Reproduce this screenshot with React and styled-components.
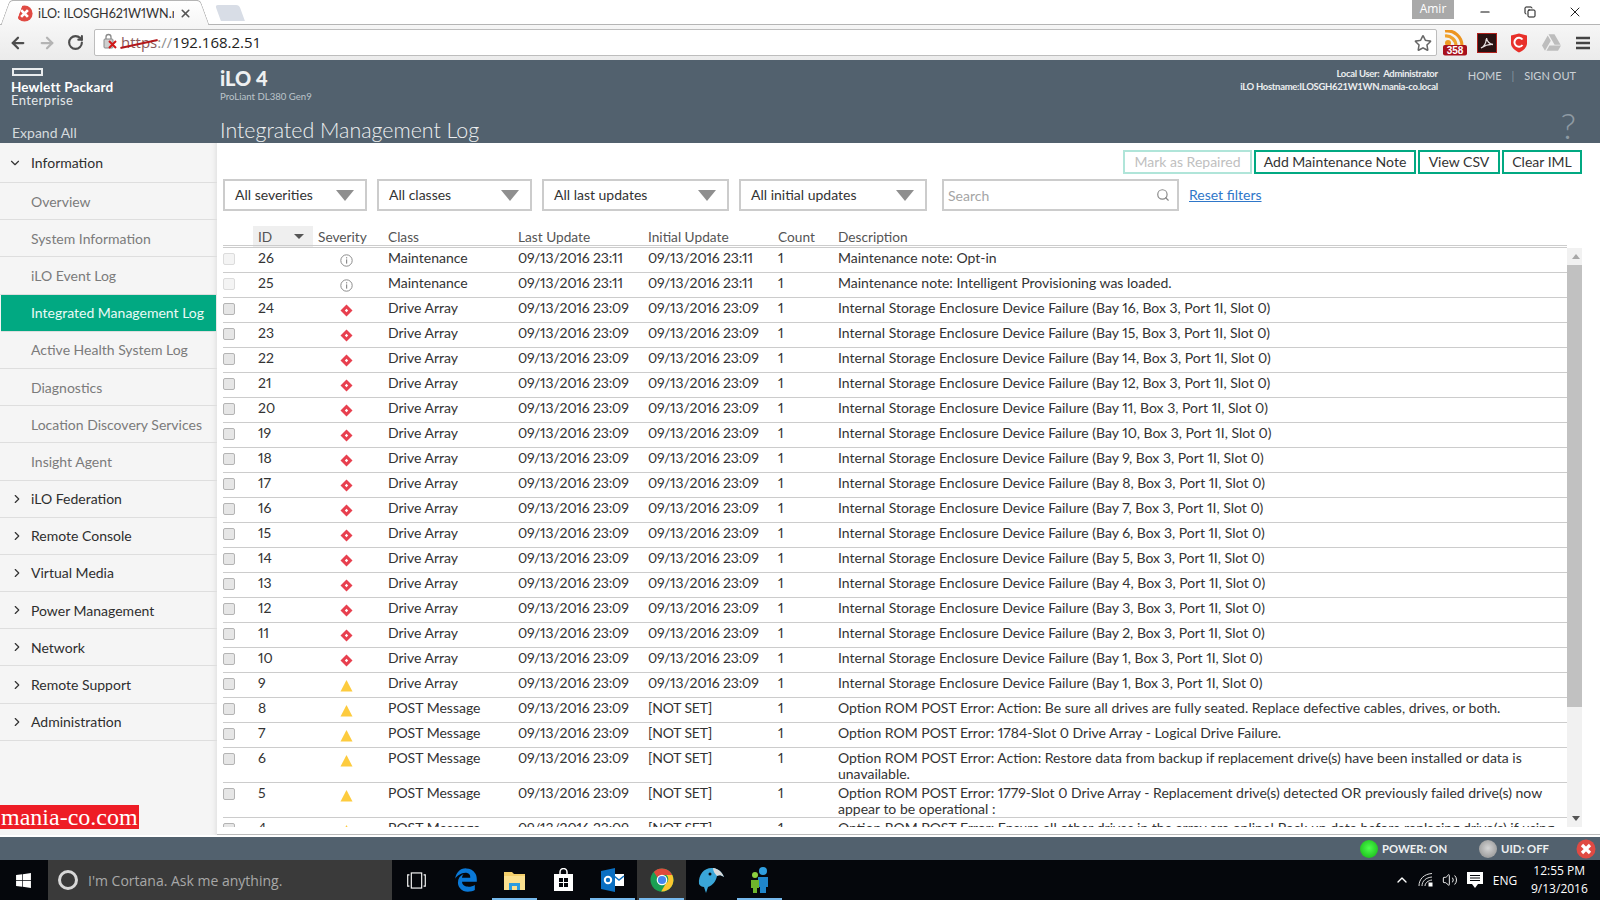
import React from "react";
import styled, { createGlobalStyle } from "styled-components";
import { FaWindows, FaEdgeLegacy, FaGoogleDrive, FaRegStar } from "react-icons/fa";
import { LuChevronDown, LuChevronRight, LuSearch, LuVolume2, LuChevronUp, LuRotateCw, LuArrowLeft, LuArrowRight, LuX, LuMinus, LuCopy } from "react-icons/lu";

const slate = "#52616e";
const green = "#01a982";
const uiFont = `"Lato", "Open Sans", sans-serif`;
const winFont = `"Open Sans", "Noto Sans", sans-serif`;

const GlobalStyle = createGlobalStyle`
  html, body { margin: 0; padding: 0; background: #fff; overflow: hidden; }
  * { box-sizing: border-box; }
  #root { width: 1600px; height: 900px; }
`;

const Page = styled.div`
  width: 1600px;
  height: 900px;
  display: flex;
  flex-direction: column;
  font-family: ${uiFont};
  overflow: hidden;
`;

/* browser chrome */
const TabStrip = styled.div`
  height: 25px;
  flex: none;
  display: flex;
  align-items: flex-end;
  padding-left: 12px;
  background: #fff;
  border-bottom: 1px solid #b5b5b5;
  position: relative;
`;

const ActiveTab = styled.div`
  width: 186px;
  height: 25px;
  margin-bottom: -1px;
  display: flex;
  align-items: center;
  padding-left: 4px;
  gap: 5px;
  position: relative;
  z-index: 1;
  font: 12.6px ${uiFont};
  color: #333;
  background: linear-gradient(#fff, #f6f6f6);
  border-top: 1px solid #b5b5b5;
  &::before, &::after {
    content: "";
    position: absolute;
    top: -1px;
    bottom: 0;
    width: 14px;
    background: linear-gradient(#fff, #f6f6f6);
    border-top: 1px solid #b5b5b5;
  }
  &::before { left: -7px; transform: skewX(-20deg); border-left: 1px solid #b5b5b5; border-top-left-radius: 4px; }
  &::after { right: -7px; transform: skewX(20deg); border-right: 1px solid #b5b5b5; border-top-right-radius: 4px; }
`;

const TabTitle = styled.span`
  width: 136px;
  white-space: nowrap;
  overflow: hidden;
  position: relative;
  z-index: 1;
  font-variant-numeric: proportional-nums;
`;

const GhostTab = styled.div`
  width: 24px;
  height: 16px;
  margin: 0 0 3px 20px;
  background: #d8dde6;
  border-radius: 3px 3px 0 0;
  transform: skewX(20deg);
`;

const UserBadge = styled.div`
  position: absolute;
  left: 1412px;
  top: 0;
  width: 42px;
  height: 19px;
  background: #a9a9a9;
  color: #fff;
  font: 12px/18px ${winFont};
  text-align: center;
`;

const WindowButtons = styled.div`
  margin-left: auto;
  height: 24px;
  display: flex;
  align-self: flex-start;
  padding-right: 3px;
  color: #111;
`;

const WindowButton = styled.div`
  width: 45px;
  height: 24px;
  display: flex;
  align-items: center;
  justify-content: center;
`;

const Toolbar = styled.div`
  height: 35px;
  flex: none;
  display: flex;
  align-items: center;
  background: linear-gradient(#f6f6f6, #ebebeb);
`;

const NavButton = styled.div`
  width: 29px;
  height: 28px;
  display: flex;
  align-items: center;
  justify-content: center;
  color: ${(p) => (p.$off ? "#b4b4b4" : "#4d4d4d")};
`;

const NavGroup = styled.div`
  width: 94px;
  padding-left: 3px;
  display: flex;
`;

const Omnibox = styled.div`
  width: 1343px;
  height: 27px;
  background: #fff;
  border: 1px solid #bdbdbd;
  border-radius: 2px;
  display: flex;
  align-items: center;
  padding: 0 4px 2px 7px;
  font: 15px ${winFont};
  color: #222;
`;

const Strike = styled.span`
  color: #8a5a5a;
  position: relative;
  margin-left: 2px;
  &::after {
    content: "";
    position: absolute;
    left: -1px;
    right: -1px;
    top: 11px;
    height: 1.5px;
    background: #b3181c;
    transform: rotate(-12deg);
  }
`;

const Scheme = styled.span`
  color: #8f8f8f;
`;

const StarSlot = styled.div`
  margin-left: auto;
  margin-top: 2px;
  color: #666;
  display: flex;
`;

const Extensions = styled.div`
  display: flex;
  margin-left: 2px;
`;

const Extension = styled.div`
  width: 32px;
  height: 30px;
  display: flex;
  align-items: center;
  justify-content: center;
  color: #bdbdbd;
`;

/* iLO header */
const Header = styled.header`
  height: 83px;
  flex: none;
  display: grid;
  grid-template-columns: 220px 1fr auto;
  background: ${slate};
  color: #fff;
`;

const Brand = styled.div`
  padding: 8px 0 0 12px;
  display: flex;
  flex-direction: column;
`;

const LogoBar = styled.div`
  width: 31px;
  height: 8px;
  border: 2px solid #e9ecee;
`;

const BrandName = styled.div`
  font: 700 13.5px/13px ${uiFont};
  margin-top: 5px;
  margin-left: -1px;
  letter-spacing: 0.15px;
`;

const BrandSub = styled.div`
  font: 400 13px/13px ${uiFont};
  margin-left: -1px;
  color: #e5e8ea;
  letter-spacing: 0.4px;
`;

const ExpandAll = styled.div`
  margin-top: 17px;
  font: 14px/18px ${uiFont};
  color: #d5dadd;
`;

const Product = styled.div`
  padding: 6px 0 0 0;
`;

const ProductName = styled.div`
  font: 900 20px/24px ${uiFont};
  color: #eef0f1;
`;

const ProductModel = styled.div`
  font: 9.6px/12px ${uiFont};
  color: #bcc4ca;
  margin-top: 1px;
`;

const PageTitle = styled.h1`
  margin: 13px 0 0;
  font: 300 21.4px/28px ${uiFont};
  color: #eef0f1;
`;

const HeaderRight = styled.div`
  display: flex;
  flex-direction: column;
  align-items: flex-end;
  padding: 7px 24px 0 0;
`;

const SessionRow = styled.div`
  display: flex;
  gap: 30px;
`;

const SessionInfo = styled.div`
  font: 700 9.5px/13px ${uiFont};
  letter-spacing: -0.3px;
  text-align: right;
  color: #eceeef;
`;

const TopLinks = styled.div`
  display: flex;
  gap: 10px;
  font: 11px/15px ${uiFont};
  color: #ccd2d6;
  padding-top: 1px;
`;

const Separator = styled.span`
  color: #8795a0;
`;

const HelpMark = styled.div`
  font: 300 36px/30px ${uiFont};
  color: #8e9aa3;
  margin-top: 17px;
`;

/* body */
const Body = styled.div`
  flex: 1;
  min-height: 0;
  display: flex;
`;

const Sidebar = styled.nav`
  width: 217px;
  flex: none;
  background: #f5f5f5;
  box-shadow: inset -5px 0 5px -4px #dcdcdc;
  position: relative;
`;

const NavRow = styled.div`
  height: ${(p) => p.$h || 37.2}px;
  display: flex;
  align-items: center;
  border-bottom: 1px solid #dedede;
  font: 14px ${uiFont};
  position: relative;
  color: ${(p) => (p.$active ? "#eafaf6" : p.$sub ? "#7b7b7b" : "#2e2e2e")};
  background: ${(p) => (p.$active ? green : "transparent")};
  margin-left: ${(p) => (p.$active ? 1 : 0)}px;
  margin-right: ${(p) => (p.$active ? 1 : 0)}px;
  padding-left: ${(p) => (p.$active ? 30 : 31)}px;
`;

const NavArrow = styled.span`
  position: absolute;
  left: ${(p) => (p.$open ? 8 : 10)}px;
  top: 50%;
  transform: translateY(-50%);
  display: flex;
  color: #333;
`;

const Watermark = styled.div`
  position: absolute;
  left: 0;
  top: 662px;
  width: 139px;
  height: 24px;
  background: #ee1c25;
  color: #fff;
  font: 400 24px/24px "Liberation Serif", serif;
  white-space: nowrap;
  padding-left: 1px;
`;

const Main = styled.main`
  flex: 1;
  min-width: 0;
  padding: 7px 18px 0 6px;
  display: flex;
  flex-direction: column;
  background: #fff;
`;

const Actions = styled.div`
  display: flex;
  justify-content: flex-end;
  gap: 2px;
  height: 24px;
`;

const ActionButton = styled.button`
  height: 24px;
  width: ${(p) => p.$w}px;
  padding: 0 0 2px;
  background: #fff;
  border: 2px solid ${(p) => (p.$off ? "#b0e5d9" : green)};
  color: ${(p) => (p.$off ? "#c0c0c0" : "#333")};
  font: 14px ${uiFont};
`;

const Filters = styled.div`
  display: flex;
  align-items: center;
  height: 32px;
  margin-top: 5px;
  gap: 10px;
`;

const Select = styled.div`
  width: ${(p) => p.$w}px;
  height: 32px;
  border: 2px solid #ccc;
  display: flex;
  align-items: center;
  justify-content: space-between;
  padding: 0 11px 2px 10px;
  font: 14px ${uiFont};
  color: #333;
  &::after {
    content: "";
    margin-top: 2px;
    border-left: 9px solid transparent;
    border-right: 9px solid transparent;
    border-top: 11px solid #8f8f8f;
  }
`;

const Search = styled.div`
  width: 237px;
  height: 32px;
  margin-left: 5px;
  border: 2px solid #ccc;
  display: flex;
  align-items: center;
  justify-content: space-between;
  padding: 0 7px 0 4px;
  font: 14px ${uiFont};
  color: #a5a5a5;
`;

const ResetLink = styled.a`
  font: 14px ${uiFont};
  color: #2f77c9;
  text-decoration: underline;
  margin-bottom: 1px;
`;

const TableArea = styled.div`
  flex: 1;
  min-height: 0;
  margin-top: 15px;
  margin-bottom: 8px;
  display: flex;
  overflow: hidden;
`;

const TableClip = styled.div`
  width: 1344px;
  flex: none;
  overflow: hidden;
`;

const LogTable = styled.table`
  width: 1344px;
  table-layout: fixed;
  border-collapse: separate;
  border-spacing: 0;
  font: 14px/16px ${uiFont};
  color: #333;
  font-variant-numeric: proportional-nums;
`;

const HeadCell = styled.th`
  height: 22px;
  padding: 2px 5px 0;
  text-align: left;
  font-weight: 400;
  font-size: 13.7px;
  color: #555;
  border-bottom: 3px double #ccc;
  background: ${(p) => (p.$sorted ? "#efefef" : "transparent")};
  position: relative;
`;

const SortArrow = styled.span`
  position: absolute;
  right: 9px;
  top: 8px;
  border-left: 5px solid transparent;
  border-right: 5px solid transparent;
  border-top: 5px solid #555;
`;

const Cell = styled.td`
  padding: 2px 5px 0;
  height: 25px;
  vertical-align: top;
  border-bottom: 1px solid #ccc;
  white-space: ${(p) => (p.$wrap ? "normal" : "nowrap")};
  letter-spacing: ${(p) => (p.$stamp ? "-0.15px" : "0")};
`;

const CheckCell = styled.td`
  padding: 5px 0 0 0;
  vertical-align: top;
  border-bottom: 1px solid #ccc;
`;

const IconCell = styled.td`
  padding: 6px 0 0 27px;
  vertical-align: top;
  border-bottom: 1px solid #ccc;
  line-height: 0;
`;

const Check = styled.span`
  display: block;
  width: 12px;
  height: 12px;
  border: 1px solid ${(p) => (p.$off ? "#dcdcdc" : "#b4b4b4")};
  border-radius: 2px;
  background: ${(p) => (p.$off ? "#f4f4f4" : "#e6e6e6")};
`;

const Scrollbar = styled.div`
  width: 17px;
  flex: none;
  margin-top: 22px;
  background: #f1f1f1;
  display: flex;
  flex-direction: column;
  align-items: center;
  justify-content: space-between;
  padding: 6px 0;
  position: relative;
`;

const ScrollArrow = styled.span`
  width: 0;
  height: 0;
  border-left: 4px solid transparent;
  border-right: 4px solid transparent;
  ${(p) => (p.$up ? "border-bottom: 5px solid #a8a8a8;" : "border-top: 5px solid #555;")}
`;

const ScrollThumb = styled.div`
  position: absolute;
  left: 0;
  top: 17px;
  width: 100%;
  height: 442px;
  background: #c1c1c1;
`;

/* status bar */
const StatusBar = styled.div`
  height: 25px;
  flex: none;
  background: ${slate};
  border-top: 2px solid #fff;
  box-shadow: 0 -1px 0 #bbb;
  display: flex;
  align-items: center;
  justify-content: flex-end;
  font: 700 11.3px ${uiFont};
  color: #eef0f1;
  padding-right: 4px;
`;

const Led = styled.span`
  width: 18px;
  height: 18px;
  border-radius: 50%;
  margin-right: 4px;
  background: radial-gradient(circle at 50% 45%, ${(p) => (p.$on ? "#4dff4d, #12b012" : "#d5d5d5, #8a8a8a")});
`;

const StatusLabel = styled.span`
  margin-right: ${(p) => p.$gap}px;
`;

const CloseBall = styled.span`
  width: 20px;
  height: 20px;
  display: flex;
`;

/* windows taskbar */
const Taskbar = styled.div`
  height: 40px;
  flex: none;
  background: #05070c;
  display: flex;
  align-items: stretch;
  color: #fff;
  font-family: ${winFont};
`;

const StartButton = styled.div`
  width: 48px;
  display: flex;
  align-items: center;
  justify-content: center;
  padding-right: 1px;
`;

const CortanaBox = styled.div`
  width: 344px;
  background: #3a3a3a;
  display: flex;
  align-items: center;
  gap: 10px;
  padding-left: 10px;
  font-size: 14px;
  color: #a8a8a8;
`;

const Ring = styled.span`
  width: 20px;
  height: 20px;
  border-radius: 50%;
  border: 3px solid #d8d8d8;
`;

const TaskIcon = styled.div`
  width: 49px;
  display: flex;
  align-items: center;
  justify-content: center;
  position: relative;
  background: ${(p) => (p.$current ? "#333" : "transparent")};
  ${(p) =>
    p.$open &&
    `&::after {
      content: "";
      position: absolute;
      left: 2px;
      right: 2px;
      bottom: 0;
      height: 2px;
      background: #76b9ed;
    }`}
`;

const Tray = styled.div`
  margin-left: auto;
  display: flex;
  align-items: center;
  padding-right: 15px;
`;

const TraySlot = styled.div`
  width: ${(p) => p.$w || 24}px;
  display: flex;
  justify-content: center;
  font-size: 12px;
`;

const Clock = styled.div`
  width: 54px;
  margin-left: 9px;
  text-align: right;
  font-size: 12px;
  line-height: 18px;
  white-space: nowrap;
`;

const columns = [30, 60, 70, 130, 130, 130, 60, 734];

const navTop = ["Overview", "System Information", "iLO Event Log", "Integrated Management Log", "Active Health System Log", "Diagnostics", "Location Discovery Services", "Insight Agent"];
const navBottom = ["iLO Federation", "Remote Console", "Virtual Media", "Power Management", "Network", "Remote Support", "Administration"];

const failure = (bay) => `Internal Storage Enclosure Device Failure (Bay ${bay}, Box 3, Port 1I, Slot 0)`;
const bays = [16, 15, 14, 12, 11, 10, 9, 8, 7, 6, 5, 4, 3, 2, 1, 1];
const stamp = "09/13/2016 23:09";

const rows = [
  { id: 26, sev: "info", cls: "Maintenance", last: "09/13/2016 23:11", first: "09/13/2016 23:11", desc: "Maintenance note: Opt-in", off: true },
  { id: 25, sev: "info", cls: "Maintenance", last: "09/13/2016 23:11", first: "09/13/2016 23:11", desc: "Maintenance note: Intelligent Provisioning was loaded.", off: true },
  ...bays.map((bay, i) => ({ id: 24 - i, sev: i === 15 ? "warn" : "crit", cls: "Drive Array", last: stamp, first: stamp, desc: failure(bay) })),
  { id: 8, sev: "warn", cls: "POST Message", last: stamp, first: "[NOT SET]", desc: "Option ROM POST Error: Action: Be sure all drives are fully seated. Replace defective cables, drives, or both." },
  { id: 7, sev: "warn", cls: "POST Message", last: stamp, first: "[NOT SET]", desc: "Option ROM POST Error: 1784-Slot 0 Drive Array - Logical Drive Failure." },
  { id: 6, sev: "warn", cls: "POST Message", last: stamp, first: "[NOT SET]", desc: "Option ROM POST Error: Action: Restore data from backup if replacement drive(s) have been installed or data is unavailable." },
  { id: 5, sev: "warn", cls: "POST Message", last: stamp, first: "[NOT SET]", desc: "Option ROM POST Error: 1779-Slot 0 Drive Array - Replacement drive(s) detected OR previously failed drive(s) now appear to be operational :" },
  { id: 4, sev: "warn", cls: "POST Message", last: stamp, first: "[NOT SET]", desc: "Option ROM POST Error: Ensure all other drives in the array are online! Back up data before replacing drive(s) if using" },
];

const SeverityIcon = ({ type }) => {
  if (type === "info") {
    return (
      <svg width="13" height="13" viewBox="0 0 13 13">
        <circle cx="6.5" cy="6.5" r="5.7" fill="none" stroke="#8c8c8c" strokeWidth="1" />
        <rect x="6" y="5.4" width="1.2" height="4.2" fill="#8c8c8c" />
        <rect x="6" y="3.2" width="1.2" height="1.2" fill="#8c8c8c" />
      </svg>
    );
  }
  if (type === "crit") {
    return (
      <svg width="13" height="13" viewBox="0 0 13 13">
        <path d="M6.5 0.5 12.5 6.5 6.5 12.5 0.5 6.5Z" fill="#e8404f" />
        <path d="M6.5 4.8 8.2 6.5 6.5 8.2 4.8 6.5Z" fill="#fff" />
      </svg>
    );
  }
  return (
    <svg width="13" height="13" viewBox="0 0 13 13">
      <path d="M6.5 1 12.5 12.5H0.5Z" fill="#fdcb3e" />
    </svg>
  );
};

const ErrorBall = ({ size }) => (
  <svg width={size} height={size} viewBox="0 0 20 20">
    <circle cx="10" cy="10" r="9.5" fill="#e04a43" />
    <path d="M6 6 14 14M14 6 6 14" stroke="#fff" strokeWidth="3.2" />
  </svg>
);

const LockIcon = () => (
  <svg width="17" height="17" viewBox="0 0 17 17">
    <rect x="2" y="6" width="9" height="9" rx="1" fill="#cfcfcf" stroke="#8a8a8a" />
    <path d="M4 6V4a2.5 2.5 0 0 1 5 0v2" fill="none" stroke="#8a8a8a" strokeWidth="1.3" />
    <path d="M7 8 14 15M14 8 7 15" stroke="#d01818" strokeWidth="2" />
  </svg>
);

const RssBadge = () => (
  <svg width="26" height="26" viewBox="0 0 26 26">
    <circle cx="6" cy="13" r="3" fill="#ee9a22" />
    <path d="M3 6a10 10 0 0 1 11 10" fill="none" stroke="#f0a22c" strokeWidth="3.2" />
    <path d="M3 1a15 15 0 0 1 17 15" fill="none" stroke="#ec9420" strokeWidth="3.2" />
    <rect x="1" y="15" width="24" height="10.5" rx="2" fill="#a8101c" />
    <text x="13" y="24" textAnchor="middle" fontFamily="Liberation Sans" fontWeight="700" fontSize="10" fill="#fff">358</text>
  </svg>
);

const AcrobatIcon = () => (
  <svg width="20" height="20" viewBox="0 0 20 20">
    <rect x="0.5" y="0.5" width="19" height="19" fill="#2a1212" stroke="#b0201c" />
    <path d="M4 15c3-1 5-5 5.500-10 .2 3 3 6 6.500 6.500-4-.3-8 1-12 3.500Z" fill="none" stroke="#e8e0e0" strokeWidth="1.300" />
  </svg>
);

const ShieldIcon = () => (
  <svg width="18" height="20" viewBox="0 0 18 20">
    <path d="M1 2.500 9 0.500l8 2v8c0 4-4 7-8 9-4-2-8-5-8-9Z" fill="#e8302a" />
    <path d="M12.500 6.500A4.500 4.500 0 1 0 12.500 12" fill="none" stroke="#fff" strokeWidth="2" />
  </svg>
);

const MenuIcon = () => (
  <svg width="14" height="14" viewBox="0 0 14 14">
    <path d="M0 2h14M0 7h14M0 12h14" stroke="#444" strokeWidth="2.600" />
  </svg>
);

const TaskViewIcon = () => (
  <svg width="19" height="17" viewBox="0 0 20 18" fill="none" stroke="#fff" strokeWidth="1.200">
    <rect x="4.500" y="1" width="11" height="16" />
    <path d="M2.500 3H0.700v12h1.800M17.500 3h1.800v12h-1.800" />
  </svg>
);

const ExplorerIcon = () => (
  <svg width="23" height="23" viewBox="0 0 23 23">
    <path d="M1 3h8l2 2h11v16H1Z" fill="#f4cf6b" />
    <path d="M1 7h21v14H1Z" fill="#fbe08f" />
    <rect x="6" y="14" width="11" height="7" fill="#2a9ce0" />
    <rect x="9" y="17" width="5" height="4" fill="#fbe08f" />
  </svg>
);

const StoreIcon = () => (
  <svg width="21" height="24" viewBox="0 0 21 24">
    <path d="M7 7V4a3.500 3.500 0 0 1 7 0v3" fill="none" stroke="#fff" strokeWidth="1.500" />
    <path d="M1 6h19v17H1Z" fill="#fff" />
    <path d="M6 10h4v4H6ZM11 10h4v4h-4ZM6 15h4v4H6ZM11 15h4v4h-4Z" fill="#05070c" />
  </svg>
);

const OutlookIcon = () => (
  <svg width="24" height="24" viewBox="0 0 24 24">
    <path d="M12 6h11v12H12Z" fill="#fff" />
    <path d="M13 8l5 4 5-4" fill="none" stroke="#0a6fc2" strokeWidth="1.500" />
    <path d="M0 3 14 0v24L0 21Z" fill="#0a6fc2" />
    <circle cx="7" cy="12" r="3.200" fill="none" stroke="#fff" strokeWidth="2" />
  </svg>
);

const ChromeIcon = () => (
  <svg width="24" height="24" viewBox="0 0 24 24">
    <circle cx="12" cy="12" r="11.500" fill="#1a9f53" />
    <path d="M12 .5A11.500 11.500 0 0 1 22.300 7H12a5 5 0 0 0-4.500 2.800L3.800 3.900A11.500 11.500 0 0 1 12 .5Z" fill="#de4a3c" />
    <path d="M22.300 7A11.500 11.500 0 0 1 11.200 23.500l4.800-8.300A5 5 0 0 0 16.300 7Z" fill="#fbc62f" />
    <circle cx="12" cy="12" r="5.300" fill="#fff" />
    <circle cx="12" cy="12" r="4.100" fill="#4686ee" />
  </svg>
);

const ParrotIcon = () => (
  <svg width="30" height="28" viewBox="0 0 30 28">
    <path d="M3 18C2 8 9 1 17 2c5 .5 9 4 11 9-3-2-5-2-7-1-1 5-4 9-9 11l-2 6-2-6c-2 0-4-1-5-3Z" fill="#3aa6d8" />
    <path d="M17 2c5 .5 9 4 11 9-3-2-5-2-7-1-2-2-4-5-4-8Z" fill="#d9d9d9" />
    <circle cx="14" cy="8" r="1.500" fill="#05070c" />
  </svg>
);

const PeopleIcon = () => (
  <svg width="22" height="28" viewBox="0 0 22 28">
    <circle cx="14" cy="5" r="4" fill="#2f9fe0" />
    <path d="M9 11h10v10h-2v6h-6v-6H9Z" fill="#1f86cc" />
    <circle cx="6" cy="9" r="3" fill="#8ccf3f" />
    <path d="M2 14h8v8H8v5H4v-5H2Z" fill="#6fb52c" />
  </svg>
);

const MessageIcon = () => (
  <svg width="18" height="18" viewBox="0 0 18 18">
    <path d="M1 1h16v12h-5l-3 4-3-4H1Z" fill="#fff" />
    <path d="M4 4.500h10M4 7h10M4 9.500h10" stroke="#05070c" strokeWidth="1" />
  </svg>
);

const SignalIcon = () => (
  <svg width="16" height="16" viewBox="0 0 16 16" fill="none" stroke="#dcdcdc" strokeWidth="1">
    <path d="M1 14C1 7 6 2 14 1.500" />
    <path d="M4 14c0-5 4-8.500 10-9" />
    <path d="M7 14c0-3 3-5.500 7-6" />
    <rect x="10.500" y="10.500" width="4" height="4" fill="#fff" stroke="none" />
  </svg>
);

const App = () => {
  return (
    <Page>
      <GlobalStyle />
      <TabStrip>
        <ActiveTab>
          <ErrorBall size={17} />
          <TabTitle>iLO: ILOSGH621W1WN.ma</TabTitle>
          <LuX size={13} strokeWidth={3} color="#555" style={{ zIndex: 1 }} />
        </ActiveTab>
        <GhostTab />
        <UserBadge>Amir</UserBadge>
        <WindowButtons>
          <WindowButton><LuMinus size={14} /></WindowButton>
          <WindowButton><LuCopy size={12} /></WindowButton>
          <WindowButton><LuX size={16} strokeWidth={1.4} /></WindowButton>
        </WindowButtons>
      </TabStrip>
      <Toolbar>
        <NavGroup>
          <NavButton><LuArrowLeft size={18} strokeWidth={3} /></NavButton>
          <NavButton $off><LuArrowRight size={18} strokeWidth={3} /></NavButton>
          <NavButton><LuRotateCw size={17} strokeWidth={3} /></NavButton>
        </NavGroup>
        <Omnibox>
          <LockIcon />
          <Strike>https</Strike>
          <Scheme>://</Scheme>
          192.168.2.51
          <StarSlot><FaRegStar size={18} /></StarSlot>
        </Omnibox>
        <Extensions>
          <Extension><RssBadge /></Extension>
          <Extension><AcrobatIcon /></Extension>
          <Extension><ShieldIcon /></Extension>
          <Extension><FaGoogleDrive size={19} /></Extension>
          <Extension><MenuIcon /></Extension>
        </Extensions>
      </Toolbar>
      <Header>
        <Brand>
          <LogoBar />
          <BrandName>Hewlett Packard</BrandName>
          <BrandSub>Enterprise</BrandSub>
          <ExpandAll>Expand All</ExpandAll>
        </Brand>
        <Product>
          <ProductName>iLO 4</ProductName>
          <ProductModel>ProLiant DL380 Gen9</ProductModel>
          <PageTitle>Integrated Management Log</PageTitle>
        </Product>
        <HeaderRight>
          <SessionRow>
            <SessionInfo>
              Local User:&nbsp; Administrator
              <br />
              iLO Hostname:ILOSGH621W1WN.mania-co.local
            </SessionInfo>
            <TopLinks>
              HOME <Separator>|</Separator> SIGN OUT
            </TopLinks>
          </SessionRow>
          <HelpMark>?</HelpMark>
        </HeaderRight>
      </Header>
      <Body>
        <Sidebar>
          <NavRow $h={40}>
            <NavArrow $open><LuChevronDown size={14} strokeWidth={2} /></NavArrow>
            Information
          </NavRow>
          {navTop.map((label) => (
            <NavRow key={label} $sub $active={label === "Integrated Management Log"}>
              {label}
            </NavRow>
          ))}
          {navBottom.map((label) => (
            <NavRow key={label}>
              <NavArrow><LuChevronRight size={14} strokeWidth={2} /></NavArrow>
              {label}
            </NavRow>
          ))}
          <Watermark>mania-co.com</Watermark>
        </Sidebar>
        <Main>
          <Actions>
            <ActionButton $off $w={129}>Mark as Repaired</ActionButton>
            <ActionButton $w={162}>Add Maintenance Note</ActionButton>
            <ActionButton $w={82}>View CSV</ActionButton>
            <ActionButton $w={80}>Clear IML</ActionButton>
          </Actions>
          <Filters>
            <Select $w={144}>All severities</Select>
            <Select $w={155}>All classes</Select>
            <Select $w={187}>All last updates</Select>
            <Select $w={188}>All initial updates</Select>
            <Search>
              Search
              <LuSearch size={14} color="#888" />
            </Search>
            <ResetLink>Reset filters</ResetLink>
          </Filters>
          <TableArea>
            <TableClip>
              <LogTable>
                <colgroup>
                  {columns.map((w, i) => (
                    <col key={i} width={w} />
                  ))}
                </colgroup>
                <thead>
                  <tr>
                    <HeadCell />
                    <HeadCell $sorted>ID<SortArrow /></HeadCell>
                    <HeadCell>Severity</HeadCell>
                    <HeadCell>Class</HeadCell>
                    <HeadCell>Last Update</HeadCell>
                    <HeadCell>Initial Update</HeadCell>
                    <HeadCell>Count</HeadCell>
                    <HeadCell>Description</HeadCell>
                  </tr>
                </thead>
                <tbody>
                  {rows.map((row) => (
                    <tr key={row.id}>
                      <CheckCell><Check $off={row.off} /></CheckCell>
                      <Cell>{row.id}</Cell>
                      <IconCell><SeverityIcon type={row.sev} /></IconCell>
                      <Cell>{row.cls}</Cell>
                      <Cell $stamp>{row.last}</Cell>
                      <Cell $stamp>{row.first}</Cell>
                      <Cell>1</Cell>
                      <Cell $wrap>{row.desc}</Cell>
                    </tr>
                  ))}
                </tbody>
              </LogTable>
            </TableClip>
            <Scrollbar>
              <ScrollArrow $up />
              <ScrollThumb />
              <ScrollArrow />
            </Scrollbar>
          </TableArea>
        </Main>
      </Body>
      <StatusBar>
        <Led $on />
        <StatusLabel $gap={32}>POWER: ON</StatusLabel>
        <Led />
        <StatusLabel $gap={27}>UID: OFF</StatusLabel>
        <CloseBall><ErrorBall size={20} /></CloseBall>
      </StatusBar>
      <Taskbar>
        <StartButton><FaWindows size={17} /></StartButton>
        <CortanaBox>
          <Ring />
          I'm Cortana. Ask me anything.
        </CortanaBox>
        <TaskIcon><TaskViewIcon /></TaskIcon>
        <TaskIcon><FaEdgeLegacy size={24} color="#0a78d7" /></TaskIcon>
        <TaskIcon $open><ExplorerIcon /></TaskIcon>
        <TaskIcon><StoreIcon /></TaskIcon>
        <TaskIcon $open><OutlookIcon /></TaskIcon>
        <TaskIcon $open $current><ChromeIcon /></TaskIcon>
        <TaskIcon><ParrotIcon /></TaskIcon>
        <TaskIcon $open><PeopleIcon /></TaskIcon>
        <Tray>
          <TraySlot><LuChevronUp size={16} /></TraySlot>
          <TraySlot><SignalIcon /></TraySlot>
          <TraySlot><LuVolume2 size={16} strokeWidth={1.4} /></TraySlot>
          <TraySlot $w={26}><MessageIcon /></TraySlot>
          <TraySlot $w={34}>ENG</TraySlot>
          <Clock>12:55 PM<br />9/13/2016</Clock>
        </Tray>
      </Taskbar>
    </Page>
  );
};

export default App;
